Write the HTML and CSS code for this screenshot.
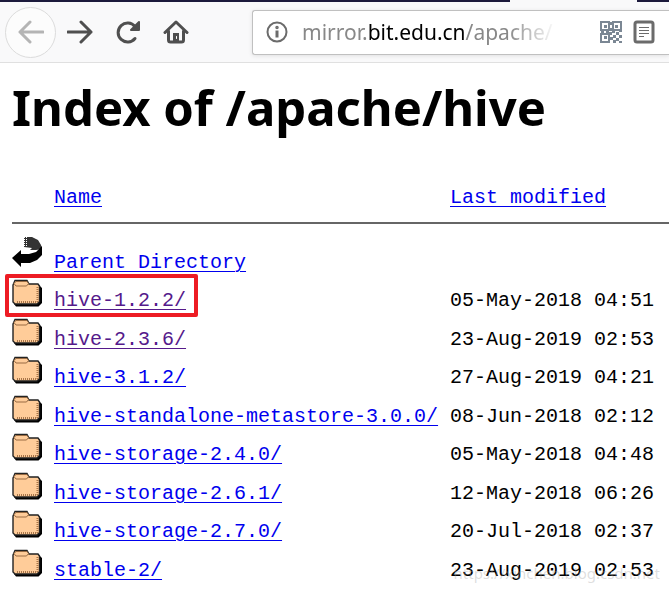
FILE: index.html
```html
<!DOCTYPE html>
<html lang="en">
<head>
  <meta charset="UTF-8">
  <meta name="viewport" content="width=device-width, initial-scale=1.0">
  <title>Index of /apache/hive</title>
  <link rel="stylesheet" href="styles.css">
</head>
<body>
  <!-- shared icons for the listing -->
  <svg class="sprite" aria-hidden="true">
    <symbol id="folder" viewBox="0 0 30 28">
      <path d="M4 27.500h22.500l3.500-3.500V9l-3-3v17l-3 2H2z" fill="#000"/>
      <path d="M1 6l2-4.500h12L17 5h9l1.500 2v15.500L25 25H3l-2-2z" fill="#ffcc99" stroke="#222" stroke-width="1.400"/>
      <path d="M2 4.500l2-2h11l1.500 2-2 2.500H4z" fill="#ffcc99" stroke="#996b42"/>
      <path d="M5 23h20M25.500 8v15" fill="none" stroke="#a87549" stroke-width="2" stroke-dasharray="1 1"/>
    </symbol>
    <symbol id="back" viewBox="0 0 30 31">
      <path d="M12 1h8l6 3 3 5 1 4-6 1h-6l2-2-8-1z" fill="#333"/>
      <path d="M12.500 1v10M14.500 1v9" stroke="#fff" stroke-dasharray="1 1"/>
      <path d="M30 10v9l-5 5-7 3H9v4L0 22l9-8v4h8l7-2 5-5z" fill="#000"/>
    </symbol>
  </svg>

  <div class="tab-strip"><span class="active-tab"></span></div>
  <nav class="toolbar">
    <button class="nav-button back-button" aria-label="Back" disabled>
      <svg width="26" height="24" viewBox="0 0 26 24"><path d="M25 12H2M12 2L2 12l10 10"/></svg>
    </button>
    <button class="nav-button" aria-label="Forward">
      <svg width="26" height="24" viewBox="0 0 26 24"><path d="M1 12h23M14 2l10 10-10 10"/></svg>
    </button>
    <button class="nav-button" aria-label="Reload">
      <svg width="26" height="24" viewBox="0 0 26 24"><path d="M20 18.500A9.500 9.500 0 1 1 20 6.500l2 2"/><path d="M24 2v8h-8z" fill="#4f4f4f" stroke-width="2"/></svg>
    </button>
    <button class="nav-button" aria-label="Home">
      <svg width="26" height="24" viewBox="0 0 26 24"><path d="M2 12.500L13 2l11 10.500M5.500 11v9q0 2 2 2h11q2 0 2-2v-9"/><path d="M10 22v-9h6v9z" fill="#4f4f4f" stroke="none"/><path d="M13.500 16.500v2" stroke="#fff" stroke-width="1"/></svg>
    </button>
    <div class="address-bar">
      <svg class="info" width="22" height="22" viewBox="0 0 22 22"><circle cx="11" cy="11" r="9.500"/><path d="M11 9.500v7" stroke-width="3"/><circle cx="11" cy="6.500" r="1" stroke-width="1.500"/></svg>
      <div class="url">mirror.<span class="domain">bit.edu.cn</span>/apache/</div>
      <svg class="qr" width="22" height="22" viewBox="0 0 22 22">
        <path d="M1 1h8v8H1zM13 1h8v8h-8zM1 13h8v8H1z" fill="#fff" stroke="#7b8794" stroke-width="2"/>
        <path d="M4 4h3v3H4zM15 4h3v3h-3zM4 15h3v3H4z"/>
        <path d="M10 1h2v3h-2zM10 7h2v3h-2zM1 10h3v2H1zM6 10h3v2H6zM9 11h3v3H9zM12 9h3v3h-3zM16 11h3v3h-3zM19 9h3v2h-3zM13 14h3v3h-3zM19 14h3v3h-3zM10 16h3v3h-3zM16 17h3v3h-3zM13 19h3v3h-3zM19 20h3v2h-3z"/>
      </svg>
      <svg class="reader" width="22" height="24" viewBox="0 0 22 24"><rect x="2" y="2" width="18" height="20" rx="2" stroke-width="3"/><path d="M6 7.500h10M6 10.500h10M6 13.500h10M6 16.500h5" stroke-width="1.200"/></svg>
    </div>
  </nav>

  <main>
    <h1>Index of /apache/hive</h1>
    <table>
      <thead>
        <tr>
          <th class="icon"></th>
          <th class="name"><a href="#name">Name</a></th>
          <th><a href="#modified">Last modified</a></th>
        </tr>
      </thead>
      <tbody>
        <tr>
          <td><svg class="back"><use href="#back"/></svg></td>
          <td><a href="#parent">Parent Directory</a></td>
          <td></td>
        </tr>
        <tr class="marked">
          <td><svg><use href="#folder"/></svg></td>
          <td><a class="visited" href="#hive-1.2.2">hive-1.2.2/</a></td>
          <td>05-May-2018 04:51</td>
        </tr>
        <tr>
          <td><svg><use href="#folder"/></svg></td>
          <td><a class="visited" href="#hive-2.3.6">hive-2.3.6/</a></td>
          <td>23-Aug-2019 02:53</td>
        </tr>
        <tr>
          <td><svg><use href="#folder"/></svg></td>
          <td><a href="#hive-3.1.2">hive-3.1.2/</a></td>
          <td>27-Aug-2019 04:21</td>
        </tr>
        <tr>
          <td><svg><use href="#folder"/></svg></td>
          <td><a href="#metastore">hive-standalone-metastore-3.0.0/</a></td>
          <td>08-Jun-2018 02:12</td>
        </tr>
        <tr>
          <td><svg><use href="#folder"/></svg></td>
          <td><a href="#storage-2.4.0">hive-storage-2.4.0/</a></td>
          <td>05-May-2018 04:48</td>
        </tr>
        <tr>
          <td><svg><use href="#folder"/></svg></td>
          <td><a href="#storage-2.6.1">hive-storage-2.6.1/</a></td>
          <td>12-May-2018 06:26</td>
        </tr>
        <tr>
          <td><svg><use href="#folder"/></svg></td>
          <td><a href="#storage-2.7.0">hive-storage-2.7.0/</a></td>
          <td>20-Jul-2018 02:37</td>
        </tr>
        <tr>
          <td><svg><use href="#folder"/></svg></td>
          <td><a href="#stable-2">stable-2/</a></td>
          <td>23-Aug-2019 02:53</td>
        </tr>
      </tbody>
    </table>
    <div class="watermark">https://xinchen.blog.csdn.net</div>
  </main>
</body>
</html>
```
FILE: styles.css
```css
*,
*::after {
  box-sizing: border-box;
}
body {
  margin: 0;
  background: #fff;
  color: #000;
  font-family: "Noto Sans", sans-serif;
}
.sprite {
  display: none;
}

/* browser chrome */
.tab-strip {
  display: flex;
  justify-content: flex-end;
  height: 2px;
  padding-right: 32px;
  background: #1c1a3c;
}
.active-tab {
  width: 127px;
  background: #f9f9fa;
}
.toolbar {
  display: flex;
  align-items: center;
  height: 61px;
  padding-left: 5px;
  background: #f9f9fa;
  border-bottom: 1px solid #e0e0e0;
}
.nav-button {
  display: flex;
  align-items: center;
  justify-content: center;
  flex: none;
  width: 48px;
  height: 52px;
  padding: 0;
  border: 0;
  background: none;
}
.nav-button svg {
  fill: none;
  stroke: #4f4f4f;
  stroke-width: 3;
  stroke-linecap: round;
  stroke-linejoin: round;
}
.back-button {
  width: 51px;
  height: 51px;
  border: 1px solid #dcdcdc;
  border-radius: 50%;
  background: #fcfcfc;
}
.back-button svg {
  stroke: #b4b4b4;
}
.address-bar {
  display: flex;
  align-items: center;
  flex: 1;
  min-width: 0;
  height: 45px;
  margin-left: 52px;
  padding: 0 14px 0 13px;
  border: 1px solid #c0c0c0;
  border-right: 0;
  border-radius: 3px 0 0 3px;
  background: #fff;
  box-shadow: 0 1px 4px rgba(0, 0, 0, 0.1);
}
.address-bar svg {
  flex: none;
}
.info,
.reader {
  fill: none;
  stroke: #6b6b6b;
  stroke-width: 2;
}
.url {
  flex: 1;
  min-width: 0;
  margin: 0 12px 0 14px;
  overflow: hidden;
  color: #888;
  font-size: 21px;
  line-height: 30px;
  white-space: nowrap;
  -webkit-mask-image: linear-gradient(to left, transparent 32px, #000 80px);
  mask-image: linear-gradient(to left, transparent 32px, #000 80px);
}
.domain {
  color: #000;
}
.qr {
  margin-right: 11px;
  fill: #7b8794;
}

/* directory listing */
main {
  position: relative;
  padding: 0 0 0 12px;
}
h1 {
  margin: 0;
  padding: 11px 0 34px;
  font-size: 49px;
  line-height: 66px;
  white-space: nowrap;
}
table {
  width: 100%;
  border-collapse: collapse;
  table-layout: fixed;
  font: 20px/24px "Liberation Mono", monospace;
}
th,
td {
  padding: 0;
  text-align: left;
  font-weight: normal;
  white-space: nowrap;
  vertical-align: bottom;
}
th {
  height: 49px;
  padding-bottom: 12px;
  border-bottom: 2px solid #666;
}
.icon {
  width: 42px;
}
.name {
  width: 396px;
}
td {
  height: 39px;
}
tr:nth-child(even) td {
  height: 38px;
}
tr:first-child td {
  height: 52px;
}
td svg {
  display: block;
  width: 30px;
  height: 28px;
  margin-bottom: 6px;
}
td .back {
  height: 31px;
  margin-bottom: 8px;
}
a {
  color: #0000ee;
  text-decoration-thickness: 1px;
  text-underline-offset: 3px;
}
.visited {
  color: #551a8b;
}
.marked td:first-child {
  position: relative;
}
/* red frame over the first release */
.marked td:first-child::after {
  content: "";
  position: absolute;
  left: -7px;
  bottom: -4px;
  width: 193px;
  height: 43px;
  border: 4px solid #ed1c24;
  border-radius: 2px;
}
.watermark {
  position: absolute;
  right: 9px;
  bottom: 0;
  color: rgba(160, 160, 160, 0.35);
  font-size: 15px;
  line-height: 20px;
}
```
